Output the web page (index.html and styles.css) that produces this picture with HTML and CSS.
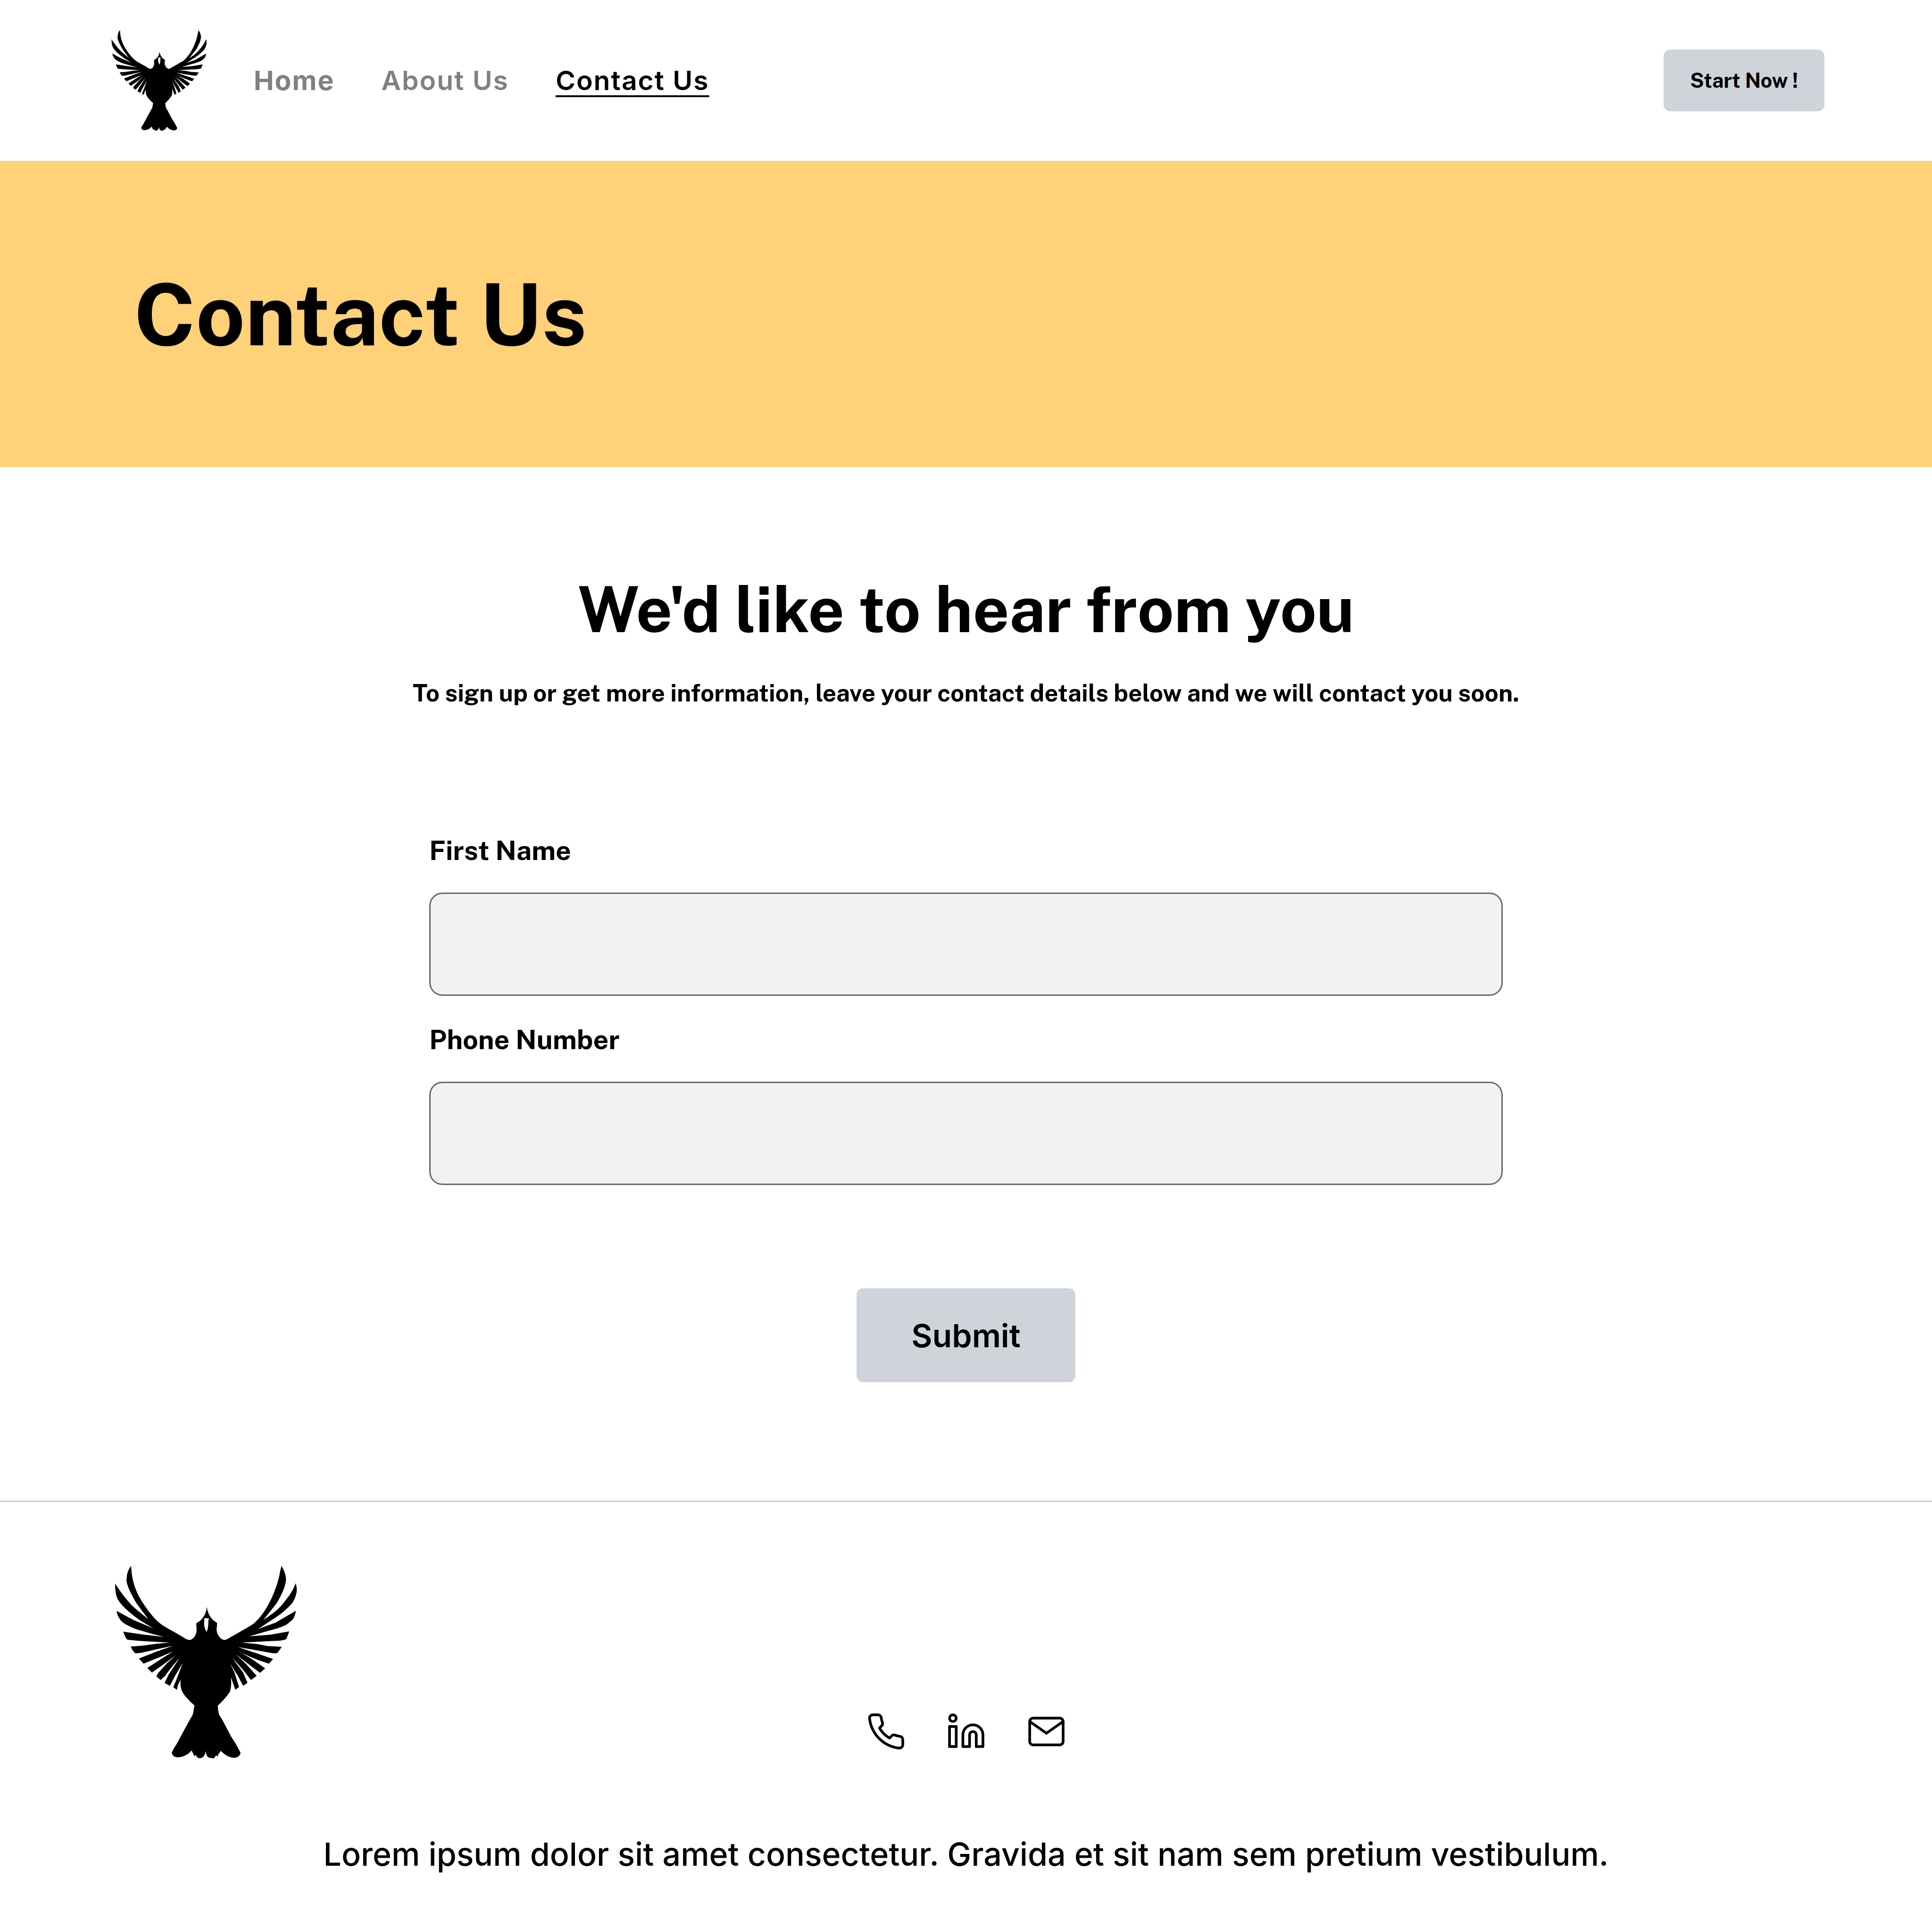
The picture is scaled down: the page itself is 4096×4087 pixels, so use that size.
FILE: index.html
```html
<!DOCTYPE html>
<html lang="en">
<head>
<meta charset="utf-8">
<title>Contact Us</title>
<link rel="stylesheet" href="styles.css">
</head>
<body>
<svg class="sprite" aria-hidden="true">
  <symbol id="bird" viewBox="42 43 546 578">
    <path transform="scale(.3954 .4209)" fill-rule="evenodd" d="M231 107 C234 180 248 235 276 296 C300 345 345 410 400 470 Q430 502 460 522 L503 547 L590 593 L640 622 Q655 630 670 632 Q692 628 705 613 Q725 590 725 558 L722 514 L752 495 Q797 457 802 398 Q808 452 850 492 L880 511 L875 560 Q880 595 905 618 Q918 630 935 632 Q955 628 975 615 L1100 548 L1150 520 Q1200 480 1240 422 Q1290 350 1325 255 Q1348 190 1354 150 L1365 106 Q1395 150 1400 200 Q1397 250 1360 318 L1330 370 L1228 490 L1300 443 Q1360 400 1400 345 Q1450 290 1472 230 Q1483 255 1480 290 Q1473 330 1448 368 Q1390 430 1320 473 L1190 553 L1320 509 L1474 424 Q1465 475 1445 490 L1405 522 Q1360 545 1260 568 L1122 606 L1280 594 L1424 571 L1402 625 Q1375 638 1300 638 L1062 650 L1180 660 L1260 674 L1368 680 L1333 725 L1300 725 L1180 705 L1040 682 L1170 724 L1302 766 L1271 800 L1195 775 Q1100 742 1032 706 L1140 765 L1242 832 L1204 865 L1140 820 L1020 732 L1085 790 L1133 838 L1178 886 L1135 915 L1085 855 L997 758 L1030 805 L1075 860 L1109 935 L1076 957 L1040 892 L977 797 L1010 860 L1045 965 L1017 984 L984 896 L986 935 Q986 970 977 997 Q940 1050 884 1097 Q886 1130 895 1162 L918 1196 L950 1253 L985 1315 L1022 1370 L1057 1432 Q1045 1470 1000 1466 Q950 1460 907 1417 L885 1448 Q887 1465 880 1454 L870 1450 Q860 1474 845 1470 L812 1463 Q797 1450 793 1417 Q790 1450 770 1463 Q745 1476 727 1462 L720 1446 L709 1456 L687 1415 Q645 1460 588 1463 Q545 1465 537 1430 Q550 1400 575 1368 L612 1303 L660 1220 L697 1158 L709 1095 Q680 1075 655 1045 Q603 1000 603 940 L604 914 Q580 950 577 985 L549 967 L590 870 L620 795 Q585 850 560 890 L523 957 L483 935 L515 875 L597 758 L545 815 Q510 855 485 888 L453 915 L421 890 L435 865 L500 798 L568 740 L490 795 L388 862 L353 830 L450 770 L548 713 L460 748 L324 800 L290 763 L420 714 L548 673 L450 692 L305 723 L263 726 Q240 710 228 678 L310 673 L420 658 L522 650 L300 638 L205 630 Q192 625 188 612 L171 572 L330 594 L478 610 L380 586 L270 556 Q190 525 165 505 Q127 470 121 425 L180 455 L250 490 L400 550 L300 494 Q190 420 150 370 Q108 330 110 232 L137 270 Q180 330 240 390 Q300 440 360 484 L270 370 Q195 250 196 205 Q198 140 231 107 Z M780 480 L783 495 L781 520 Q784 550 800 574 Q815 550 814 488 L822 481 Q800 474 780 480 Z"/>
  </symbol>
</svg>

<header class="header">
  <a class="brand" href="#" aria-label="Home page"><svg class="logo"><use href="#bird"/></svg></a>
  <nav class="nav">
    <a class="nav-link nav-home" href="#">Home</a>
    <a class="nav-link" href="#">About Us</a>
    <a class="nav-link nav-active" href="#" aria-current="page">Contact Us</a>
  </nav>
  <button class="button start" type="button">Start Now !</button>
</header>

<main>
  <section class="hero"><h1 class="hero-title">Contact Us</h1></section>
  <section class="contact">
    <h2 class="contact-title">We'd like to hear from you</h2>
    <p class="contact-text">To sign up or get more information, leave your contact details below and we will contact you soon.</p>
    <form class="form">
      <label class="label" for="first-name">First Name</label>
      <input class="input" id="first-name" type="text">
      <label class="label" for="phone">Phone Number</label>
      <input class="input" id="phone" type="tel">
      <button class="button submit" type="submit">Submit</button>
    </form>
  </section>
</main>

<footer class="footer">
  <svg class="footer-logo" role="img" aria-label="Bird logo"><use href="#bird"/></svg>
  <div class="social">
    <a href="#" aria-label="Phone"><svg class="icon" viewBox="0 0 24 24"><path d="M22 16.92v3a2 2 0 0 1-2.18 2 19.79 19.79 0 0 1-8.63-3.07 19.5 19.5 0 0 1-6-6 19.79 19.79 0 0 1-3.07-8.67A2 2 0 0 1 4.11 2h3a2 2 0 0 1 2 1.72 12.84 12.84 0 0 0 .7 2.81 2 2 0 0 1-.45 2.11L8.09 9.91a16 16 0 0 0 6 6l1.27-1.27a2 2 0 0 1 2.11-.45 12.84 12.84 0 0 0 2.81.7A2 2 0 0 1 22 16.92z"/></svg></a>
    <a href="#" aria-label="LinkedIn"><svg class="icon" viewBox="0 0 24 24"><path d="M16 8a6 6 0 0 1 6 6v7h-4v-7a2 2 0 0 0-4 0v7h-4v-7a6 6 0 0 1 6-6z"/><rect x="2" y="9" width="4" height="12"/><circle cx="4" cy="4" r="2"/></svg></a>
    <a href="#" aria-label="Email"><svg class="icon" viewBox="0 0 24 24"><path d="M4 4h16a2 2 0 0 1 2 2v12a2 2 0 0 1-2 2H4a2 2 0 0 1-2-2V6a2 2 0 0 1 2-2z"/><path class="flap" d="M22 6l-10 7L2 6"/></svg></a>
  </div>
  <p class="footer-text">Lorem ipsum dolor sit amet consectetur. Gravida et sit nam sem pretium vestibulum.</p>
</footer>
</body>
</html>
```
FILE: styles.css
```css
* { box-sizing: border-box; }
body { margin: 0; background: #fff; color: #000; font-family: Inter, sans-serif; }
h1, h2, p { margin: 0; }
a { color: inherit; text-decoration: none; }
.sprite { position: absolute; width: 0; height: 0; }

.header { display: flex; align-items: center; height: 341px; padding: 0 228px 0 236px; }
.brand { display: flex; margin-right: 99px; }
.logo { width: 203px; height: 215px; }
.nav { display: flex; gap: 99px; }
.nav-link { color: #808080; font-size: 57px; font-weight: 600; line-height: 68px; letter-spacing: 2px; }
.nav-home { font-weight: 700; }
.nav-active { color: #000; text-decoration: underline; text-decoration-thickness: 4px; text-underline-offset: 11px; }

.button { border: 0; border-radius: 14px; background: #ced4da; color: #000; font-family: "Public Sans", "Libre Franklin", Inter, sans-serif; }
.start { width: 341px; height: 131px; margin-left: auto; font-size: 43px; font-weight: 700; }

.hero { display: flex; align-items: center; height: 649px; padding: 0 284px; background: #ffd179; }
.hero-title, .contact-title, .contact-text, .label { font-family: "Public Sans", "Libre Franklin", Inter, sans-serif; font-weight: 700; }
.hero-title { font-size: 182px; line-height: 214px; }

.contact { display: flex; flex-direction: column; align-items: center; padding: 221px 228px 251px; }
.contact-title { font-size: 135px; line-height: 160px; }
.contact-text { margin-top: 68px; font-size: 51px; line-height: 60px; }
.form { display: flex; flex-direction: column; width: 100%; max-width: 2276px; margin-top: 270px; }
.label { font-size: 57px; line-height: 68px; margin-bottom: 55px; }
.input { height: 219px; padding: 0 48px; margin-bottom: 59px; border: 3px solid #696969; border-radius: 28px; background: #f2f2f2; font: 500 57px Inter, sans-serif; }
.submit { align-self: center; width: 464px; height: 199px; margin-top: 160px; font-family: Inter, sans-serif; font-size: 68px; font-weight: 600; }

.footer { display: flex; flex-direction: column; align-items: center; padding: 134px 228px 115px; border-top: 3px solid #cbcbcb; }
.footer-logo { align-self: flex-start; width: 388px; height: 411px; margin-left: 15px; }
.social { display: flex; gap: 85px; margin-top: -101px; }
.social a { display: flex; }
.icon { width: 85px; height: 85px; fill: none; stroke: #000; stroke-width: 1.6; stroke-linecap: round; stroke-linejoin: round; }
.flap { stroke-linejoin: miter; }
.footer-text { margin-top: 176px; font-size: 68px; font-weight: 500; line-height: 82px; }
```
